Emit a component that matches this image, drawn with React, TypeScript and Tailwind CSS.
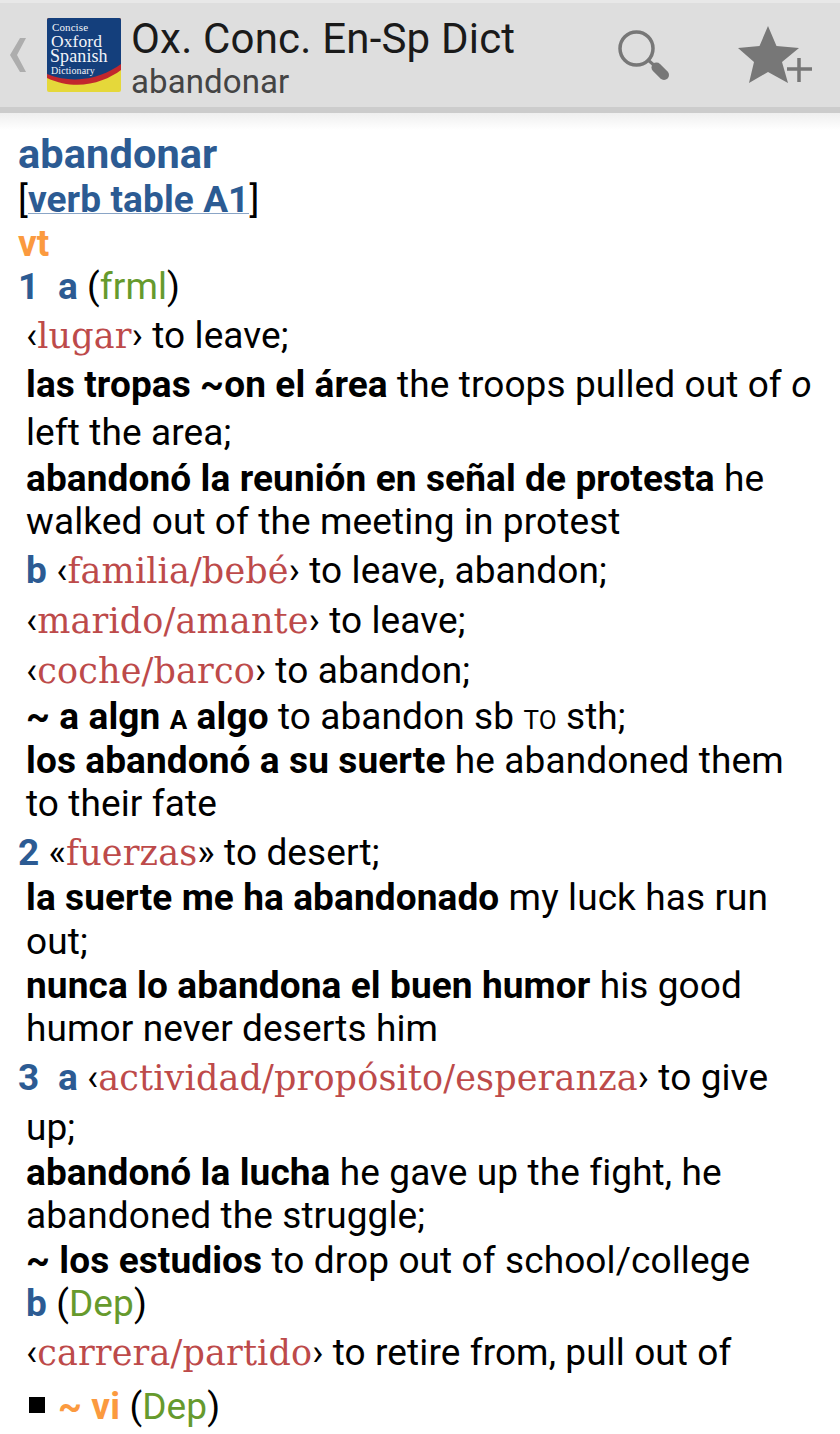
import React from "react";

const B = ({ c }: { c: string }) => <span className="font-bold text-[#2c5b93]">{c}</span>;
const K = ({ c }: { c: string }) => <span className="font-bold text-black">{c}</span>;
const R = ({ c }: { c: string }) => (
  <span className="font-['DejaVu_Serif',serif] text-[#bd4a4a] text-[35px] tracking-[0.15px]">{c}</span>
);
const G = ({ c }: { c: string }) => <span className="text-[#669a2d]">{c}</span>;
const O = ({ c }: { c: string }) => <span className="font-bold text-[#fb9a3f]">{c}</span>;

function Row({ h, pl = "pl-[26px]", children }: { h: string; pl?: string; children: React.ReactNode }) {
  return <div className={`${h} ${pl} leading-[44px] whitespace-pre`}>{children}</div>;
}

function Logo() {
  return (
    <svg width="74" height="74" viewBox="0 0 74 74" className="shrink-0">
      <rect width="74" height="74" rx="2" fill="#e5d83a" />
      <path d="M0 2 a2 2 0 0 1 2-2 H72 a2 2 0 0 1 2 2 V52 C58 64 30 74 0 60 Z" fill="#c2272d" />
      <path d="M0 2 a2 2 0 0 1 2-2 H72 a2 2 0 0 1 2 2 V46 C58 58 30 68 0 56 Z" fill="#143f7c" />
      <g fontFamily="'Liberation Serif',serif" fill="#f2f4f8">
        <text x="5" y="13" fontSize="11">Concise</text>
        <text x="4" y="29" fontSize="17.5">Oxford</text>
        <text x="3" y="44" fontSize="18">Spanish</text>
        <text x="4" y="56" fontSize="10">Dictionary</text>
      </g>
    </svg>
  );
}

export default function App() {
  return (
    <div className="w-[840px] h-[1434px] overflow-hidden bg-white font-['Roboto',sans-serif] text-[37px] tracking-[0.1px] text-black flex flex-col">
      <header className="h-[107px] shrink-0 bg-[#dedede] border-t-[3px] border-[#e8e8e8] flex items-center">
        <svg width="18" height="36" viewBox="0 0 18 36" className="ml-[9px] shrink-0">
          <path d="M17 1 H11 L1 18 L11 35 H17 L8 18 Z" fill="#adadad" />
        </svg>
        <div className="ml-[20px]"><Logo /></div>
        <div className="ml-[10px] pt-[5px] flex flex-col w-[400px]">
          <span className="text-[42px] leading-[48px] text-[#1a1a1a] tracking-[0.2px]">Ox. Conc. En-Sp Dict</span>
          <span className="text-[33px] leading-[37px] text-[#444444]">abandonar</span>
        </div>
        <svg width="54" height="54" viewBox="0 0 54 54" className="ml-[87px] shrink-0">
          <circle cx="18.5" cy="20.5" r="16.5" fill="none" stroke="#777777" strokeWidth="3.5" />
          <path d="M30 32 L37 38" stroke="#777777" strokeWidth="3" fill="none" />
          <path d="M38.5 39.5 L46 47" stroke="#777777" strokeWidth="10" strokeLinecap="round" fill="none" />
        </svg>
        <svg width="74" height="60" viewBox="0 0 74 60" className="ml-[66px] shrink-0">
          <path d="M30 1 L38.5 21 L61 23 L44 37 L50 58 L30 47 L11 58 L16 37 L0 23 L21.5 21 Z" fill="#777777" />
          <path d="M49 44 H74 M61 33 V57" stroke="#777777" strokeWidth="3.5" fill="none" />
        </svg>
      </header>
      <div className="h-[6px] shrink-0 bg-[#cccccc]" />
      <div className="h-[17px] shrink-0 bg-gradient-to-b from-[#efefef] to-white" />

      <main className="flex flex-col mt-[2px]">
        <div className="h-[46px] pl-[18px] leading-[44px] text-[41.5px] font-bold text-[#2c5b93]">abandonar</div>
        <Row h="h-[44px]" pl="pl-[18px]">[<span className="font-bold text-[#2c5b93] border-b border-[#8aa5c6] leading-[26px] inline-block">verb table A1</span>]</Row>
        <Row h="h-[43px]" pl="pl-[18px]"><O c="vt" /></Row>
        <Row h="h-[49px]" pl="pl-[18px]"><B c="1" />{"  "}<B c="a" /> (<G c="frml" />)</Row>
        <Row h="h-[49px]">‹<R c="lugar" />› to leave;</Row>
        <Row h="h-[48px]"><K c="las tropas ~on el área" /> the troops pulled out of <i>o</i></Row>
        <Row h="h-[46px]">left the area;</Row>
        <Row h="h-[43px]"><K c="abandonó la reunión en señal de protesta" /> he</Row>
        <Row h="h-[49px]">walked out of the meeting in protest</Row>
        <Row h="h-[50px]"><B c="b" /> ‹<R c="familia/bebé" />› to leave, abandon;</Row>
        <Row h="h-[50px]">‹<R c="marido/amante" />› to leave;</Row>
        <Row h="h-[46px]">‹<R c="coche/barco" />› to abandon;</Row>
        <Row h="h-[44px]"><K c="~ a algn " /><span className="font-bold text-[26px]">A</span><K c=" algo" /> to abandon sb <span className="text-[26px]">TO</span> sth;</Row>
        <Row h="h-[43px]"><K c="los abandonó a su suerte" /> he abandoned them</Row>
        <Row h="h-[49px]">to their fate</Row>
        <Row h="h-[45px]" pl="pl-[18px]"><B c="2" /> «<R c="fuerzas" />» to desert;</Row>
        <Row h="h-[44px]"><K c="la suerte me ha abandonado" /> my luck has run</Row>
        <Row h="h-[44px]">out;</Row>
        <Row h="h-[43px]"><K c="nunca lo abandona el buen humor" /> his good</Row>
        <Row h="h-[49px]">humor never deserts him</Row>
        <Row h="h-[50px]" pl="pl-[18px]"><B c="3" />{"  "}<B c="a" /> ‹<R c="actividad/propósito/esperanza" />› to give</Row>
        <Row h="h-[45px]">up;</Row>
        <Row h="h-[43px]"><K c="abandonó la lucha" /> he gave up the fight, he</Row>
        <Row h="h-[45px]">abandoned the struggle;</Row>
        <Row h="h-[43px]"><K c="~ los estudios" /> to drop out of school/college</Row>
        <Row h="h-[49px]"><B c="b" /> (<G c="Dep" />)</Row>
        <Row h="h-[54px]">‹<R c="carrera/partido" />› to retire from, pull out of</Row>
        <div className="h-[44px] pl-[29px] flex items-start whitespace-pre leading-[44px]">
          <span className="block w-[16px] h-[16px] bg-black mr-[13px] mt-[12px]" />
          <span><O c="~ vi" /> (<G c="Dep" />)</span>
        </div>
      </main>
    </div>
  );
}
